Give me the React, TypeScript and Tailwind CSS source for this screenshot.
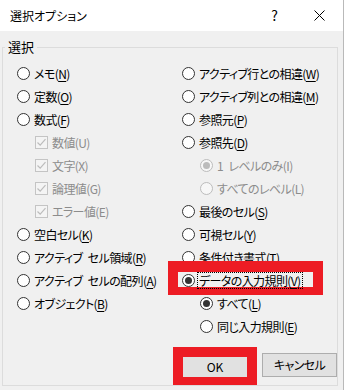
import React from "react";

type Item = {
  text: string;
  acc: string;
  kind: "radio" | "check";
  checked?: boolean;
  disabled?: boolean;
  sub?: boolean;
  mark?: boolean;
};

const left: Item[] = [
  { text: "メモ", acc: "N", kind: "radio" },
  { text: "定数", acc: "O", kind: "radio" },
  { text: "数式", acc: "F", kind: "radio" },
  { text: "数値", acc: "U", kind: "check", checked: true, disabled: true, sub: true },
  { text: "文字", acc: "X", kind: "check", checked: true, disabled: true, sub: true },
  { text: "論理値", acc: "G", kind: "check", checked: true, disabled: true, sub: true },
  { text: "エラー値", acc: "E", kind: "check", checked: true, disabled: true, sub: true },
  { text: "空白セル", acc: "K", kind: "radio" },
  { text: "アクティブ\u2002セル領域", acc: "R", kind: "radio" },
  { text: "アクティブ\u2002セルの配列", acc: "A", kind: "radio" },
  { text: "オブジェクト", acc: "B", kind: "radio" },
];

const right: Item[] = [
  { text: "アクティブ行との相違", acc: "W", kind: "radio" },
  { text: "アクティブ列との相違", acc: "M", kind: "radio" },
  { text: "参照元", acc: "P", kind: "radio" },
  { text: "参照先", acc: "D", kind: "radio" },
  { text: "1\u2002レベルのみ", acc: "I", kind: "radio", checked: true, disabled: true, sub: true },
  { text: "すべてのレベル", acc: "L", kind: "radio", disabled: true, sub: true },
  { text: "最後のセル", acc: "S", kind: "radio" },
  { text: "可視セル", acc: "Y", kind: "radio" },
  { text: "条件付き書式", acc: "T", kind: "radio" },
  { text: "データの入力規則", acc: "V", kind: "radio", checked: true, mark: true },
  { text: "すべて", acc: "L", kind: "radio", checked: true, sub: true },
  { text: "同じ入力規則", acc: "E", kind: "radio", sub: true },
];

function Radio({ checked, disabled }: { checked?: boolean; disabled?: boolean }) {
  return (
    <span
      className={`w-[13px] h-[13px] shrink-0 rounded-full border flex items-center justify-center ${
        disabled ? "border-[#bcbcbc] bg-[#f7f7f7]" : "border-[#333333] bg-white"
      }`}
    >
      {checked && (
        <span className={`w-[7px] h-[7px] rounded-full ${disabled ? "bg-[#bcbcbc]" : "bg-[#333333]"}`} />
      )}
    </span>
  );
}

function Check({ checked }: { checked?: boolean }) {
  return (
    <span className="w-[13px] h-[13px] shrink-0 border border-[#c4c4c4] bg-[#f4f4f4] flex items-center justify-center">
      {checked && (
        <svg width="11" height="11" viewBox="0 0 11 11">
          <path d="M1.5 5.5 L4.2 8.2 L9.5 2.2" fill="none" stroke="#bcbcbc" strokeWidth="1.2" />
        </svg>
      )}
    </span>
  );
}

function Row({ item }: { item: Item }) {
  return (
    <div className={`relative h-[23px] flex items-center gap-[4px] ${item.sub ? "pl-[18px]" : ""}`}>
      {item.mark && (
        <div className="absolute left-[-14px] top-[-8px] w-[155px] h-[34px] border-x-[10px] border-t-[11px] border-b-[8px] border-[#ed1c24] pointer-events-none" />
      )}
      {item.kind === "radio" ? (
        <Radio checked={item.checked} disabled={item.disabled} />
      ) : (
        <Check checked={item.checked} />
      )}
      <span
        className={`relative whitespace-nowrap text-[12px] leading-[15px] tracking-[-0.6px] ${
          item.disabled ? "text-[#8c8c8c]" : "text-black"
        } ${item.mark ? "outline outline-1 outline-dotted outline-black px-[1px] mx-[-1px]" : ""}`}
      >
        {item.text}(
        {item.disabled ? item.acc : <span className="underline underline-offset-2">{item.acc}</span>})
      </span>
    </div>
  );
}

export default function App() {
  return (
    <div className="w-[346px] h-[390px] bg-white overflow-hidden font-['Noto_Sans_CJK_JP','Noto_Sans',sans-serif] [font-feature-settings:'palt']">
      <div className="w-[344px] h-[390px] bg-[#f0f0f0] border-r border-[#b9b9b9] flex flex-col">
        <div className="h-[31px] bg-white flex items-center pl-[10px] shrink-0">
          <span className="text-[12px] text-black">選択オプション</span>
          <span className="ml-auto text-[14px] text-black mr-[36px]">?</span>
          <svg width="11" height="11" viewBox="0 0 11 11" className="mr-[18px]">
            <path d="M0.5 0.5 L10.5 10.5 M10.5 0.5 L0.5 10.5" stroke="#000" strokeWidth="1" />
          </svg>
        </div>
        <fieldset className="ml-[2px] mt-[8px] w-[336px] border border-[#dcdcdc]">
          <legend className="ml-[2px] px-[3px] text-[13px] leading-[16px] text-black">選択</legend>
          <div className="pl-[14px] pt-[7px] grid grid-cols-[165px_1fr]">
            <div className="flex flex-col">
              {left.map((it) => (
                <Row key={it.text} item={it} />
              ))}
            </div>
            <div className="flex flex-col">
              {right.map((it) => (
                <Row key={it.text} item={it} />
              ))}
            </div>
          </div>
          <div className="mt-[9px] flex items-start pl-[170px] gap-[5px]">
            <div className="w-[84px] h-[38px] border-x-[10px] border-t-[10px] border-b-[8px] border-[#ed1c24]">
              <button className="w-full h-full bg-[#e1e1e1] text-[12px] text-black flex items-center justify-center">
                OK
              </button>
            </div>
            <button className="mt-[6px] w-[75px] h-[24px] bg-[#e1e1e1] border border-[#adadad] text-[12px] tracking-[-0.6px] text-black flex items-center justify-center">
              キャンセル
            </button>
          </div>
        </fieldset>
      </div>
    </div>
  );
}
